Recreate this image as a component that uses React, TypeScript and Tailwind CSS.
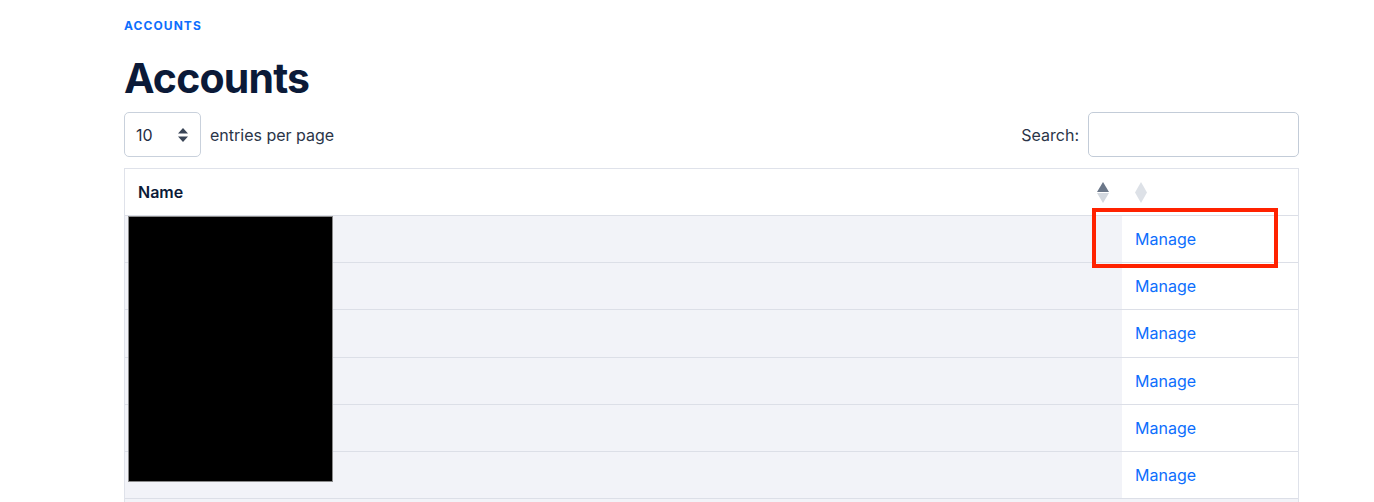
import React from 'react';

const ROWS = [0, 1, 2, 3, 4, 5];

function SortIcons() {
  return (
    <span className="flex flex-col items-center gap-[1px]">
      <svg width="12" height="10" viewBox="0 0 12 10">
        <path d="M6 0 L12 10 L0 10 Z" fill="#6b7789" />
      </svg>
      <svg width="12" height="10" viewBox="0 0 12 10">
        <path d="M0 0 L12 0 L6 10 Z" fill="#d3d8df" />
      </svg>
    </span>
  );
}

function Diamond() {
  return (
    <svg width="12" height="21" viewBox="0 0 12 21">
      <path d="M6 0 L12 10.5 L6 21 L0 10.5 Z" fill="#dde1e7" />
    </svg>
  );
}

export default function App() {
  return (
    <div
      className="min-h-[502px] bg-white text-[#1f2d45]"
      style={{ fontFamily: 'Inter, "Noto Sans", sans-serif' }}
    >
      <div className="ml-[124px] w-[1175px] pt-[19px]">
        <div className="text-[12px] font-bold tracking-[0.09em] text-[#0d6efd] leading-[14px]">ACCOUNTS</div>
        <h1 className="mt-[19px] text-[41px] font-bold leading-[52px] text-[#0b1a38] tracking-[-0.02em]">Accounts</h1>

        <div className="mt-[8px] flex items-center justify-between">
          <div className="flex items-center gap-[9px]">
            <div className="flex h-[45px] w-[77px] items-center justify-between rounded-[5px] border border-[#c9d1dc] pl-[11px] pr-[12px] text-[16px] text-[#1f2d45]">
              <span>10</span>
              <svg width="10" height="14" viewBox="0 0 10 14">
                <path d="M5 0 L10 5.5 L0 5.5 Z M0 8.5 L10 8.5 L5 14 Z" fill="#3a4557" />
              </svg>
            </div>
            <span className="text-[16px] text-[#2a3548]">entries per page</span>
          </div>
          <div className="flex items-center gap-[9px]">
            <span className="text-[16px] text-[#2a3548]">Search:</span>
            <div className="h-[45px] w-[211px] rounded-[5px] border border-[#c3ccd8]" />
          </div>
        </div>

        <div className="relative mt-[11px] border border-b-0 border-[#dfe2ea]">
          <div className="flex h-[47px] border-b border-[#dcdfe7]">
            <div className="flex flex-1 items-center justify-between pl-[13px] pr-[13px]">
              <span className="text-[16px] font-semibold text-[#0b1a38]">Name</span>
              <SortIcons />
            </div>
            <div className="flex w-[176px] items-center pl-[13px]">
              <Diamond />
            </div>
          </div>
          {ROWS.map((r) => (
            <div key={r} className="flex h-[47.2px] border-b border-[#dcdfe7]">
              <div className="flex-1 bg-[#f2f3f8]" />
              <div className="flex w-[176px] items-center bg-white pl-[13px]">
                <a className="text-[16px] text-[#0d6efd]">Manage</a>
              </div>
            </div>
          ))}
          <div className="h-[4px] bg-[#f2f3f8]" />

          <div className="absolute left-[3px] top-[47px] h-[266px] w-[205px] border border-[#8a8a8a] bg-black" />
          <div className="absolute left-[967px] top-[39px] h-[60px] w-[186px] border-[4px] border-[#ff2200]" />
        </div>
      </div>
    </div>
  );
}
